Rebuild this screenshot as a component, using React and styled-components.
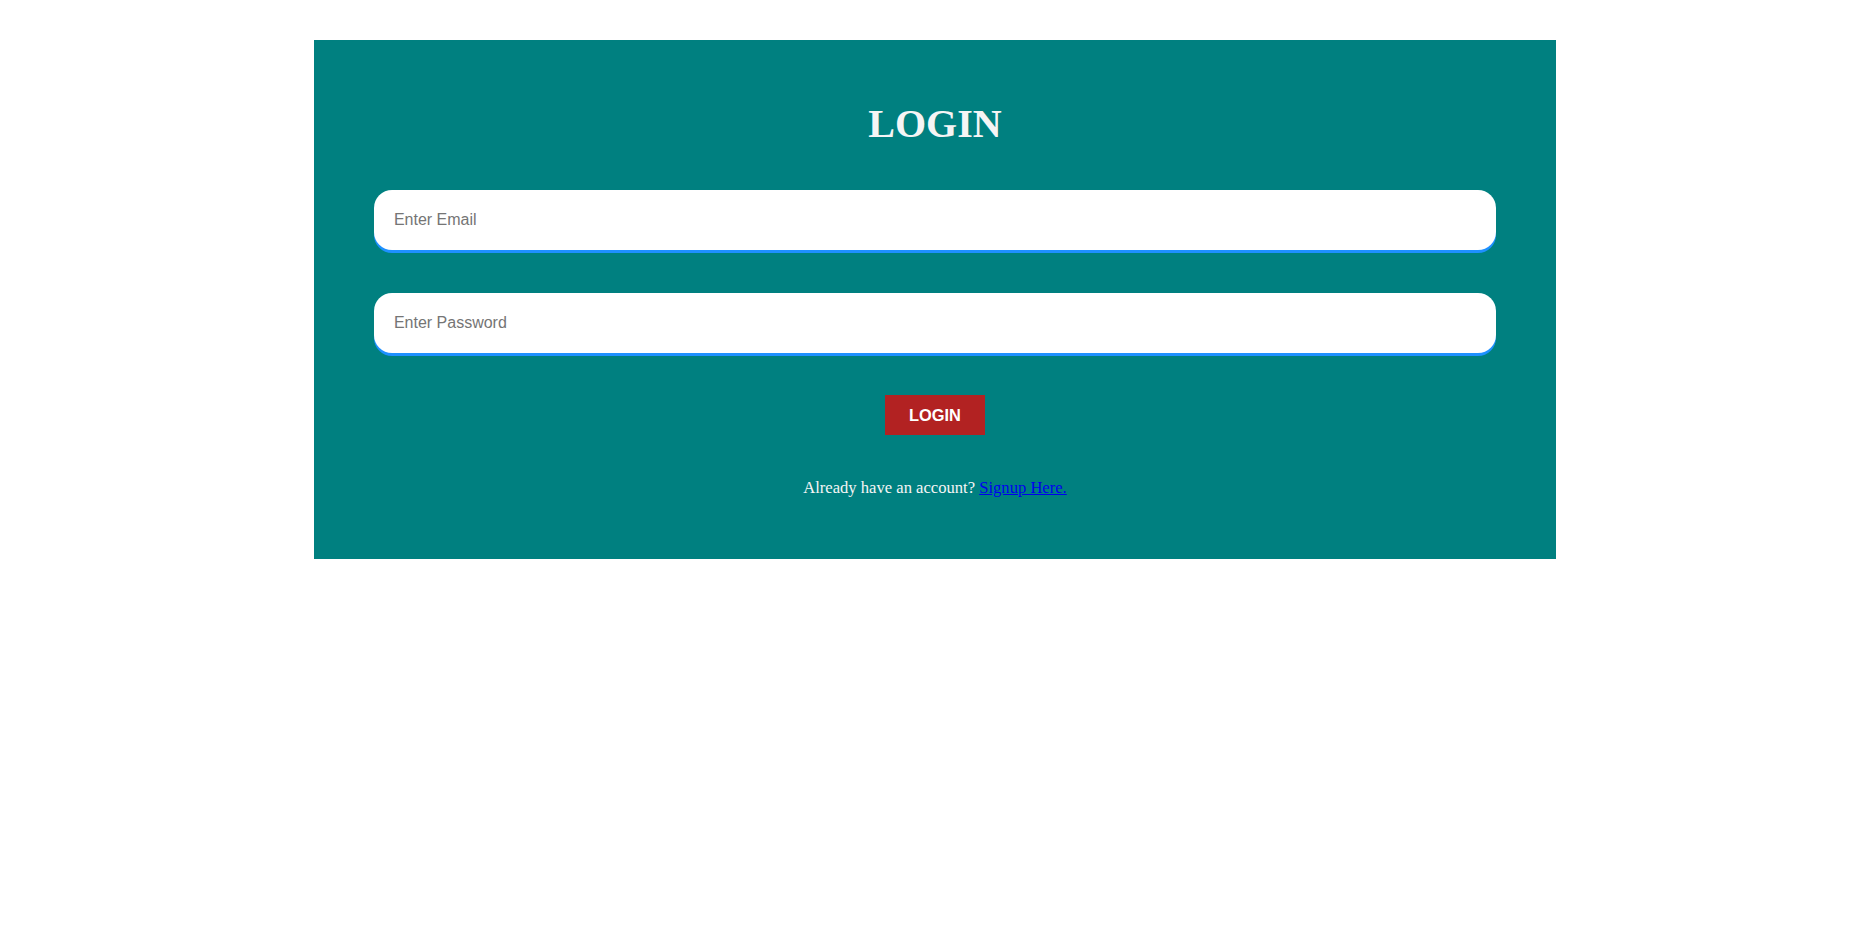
import React from "react";
import styled, { createGlobalStyle } from "styled-components";

const GlobalStyle = createGlobalStyle`
  body {
    margin: 8px;
    background: #ffffff;
    font-family: "Liberation Serif", "Times New Roman", serif;
  }
`;

const Card = styled.form`
  width: 67%;
  margin: 32px auto 0;
  box-sizing: border-box;
  padding: 61px 60px 62px;
  background-color: #008080;
  display: flex;
  flex-direction: column;
  align-items: center;
`;

const Title = styled.h1`
  margin: 0 0 43px;
  height: 46px;
  line-height: 46px;
  font-size: 40px;
  font-weight: bold;
  color: #f5f5f5;
  font-family: "Liberation Serif", "Times New Roman", serif;
`;

const Input = styled.input`
  width: 100%;
  height: 60px;
  box-sizing: border-box;
  margin: 0 0 43px;
  padding: 0 20px;
  border: none;
  outline: none;
  border-radius: 18px;
  background: #ffffff;
  box-shadow: 0 3px 0 #1e90ff;
  font-family: "Liberation Sans", Arial, sans-serif;
  font-size: 16px;
  color: #333;

  &::placeholder {
    color: #757575;
  }
`;

const Button = styled.button`
  width: 100px;
  height: 40px;
  margin: -1px 0 43px;
  border: none;
  background-color: #b22222;
  color: #ffffff;
  font-family: "Liberation Sans", Arial, sans-serif;
  font-size: 16.4px;
  font-weight: bold;
  cursor: pointer;
`;

const Footer = styled.p`
  margin: 0;
  height: 19px;
  line-height: 19px;
  font-size: 16.6px;
  color: #f5f5f5;
`;

const Link = styled.a`
  color: #0000ee;
  text-decoration: underline;
`;

export default function App() {
  return (
    <>
      <GlobalStyle />
      <Card onSubmit={(e) => e.preventDefault()}>
        <Title>LOGIN</Title>
        <Input type="email" placeholder="Enter Email" />
        <Input type="password" placeholder="Enter Password" />
        <Button type="submit">LOGIN</Button>
        <Footer>
          Already have an account? <Link href="#">Signup Here.</Link>
        </Footer>
      </Card>
    </>
  );
}
